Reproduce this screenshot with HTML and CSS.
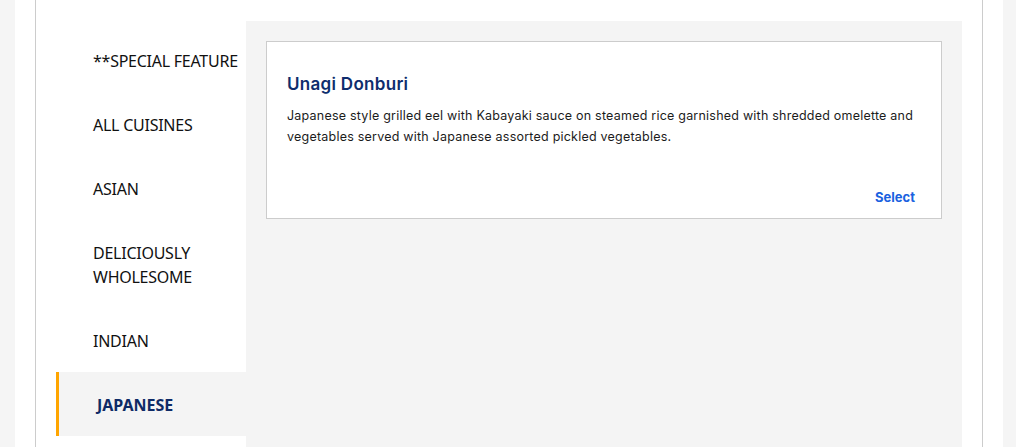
FILE: index.html
```html
<!doctype html>
<html lang="en">

<head>
	<meta charset="utf-8">
	<title>Menu - Japanese</title>
	<link rel="stylesheet" href="styles.css">
</head>

<body>
	<div class="page">
		<div class="frame">
			<ul class="cuisines">
				<li>**SPECIAL FEATURE</li>
				<li>ALL CUISINES</li>
				<li>ASIAN</li>
				<li>DELICIOUSLY WHOLESOME</li>
				<li>INDIAN</li>
				<li class="active">JAPANESE</li>
			</ul>
			<div class="dishes">
				<div class="dish">
					<h3>Unagi Donburi</h3>
					<p>Japanese style grilled eel with Kabayaki sauce on steamed rice garnished with shredded omelette and vegetables served with Japanese assorted pickled vegetables.</p>
					<div class="actions"><a href="#">Select</a></div>
				</div>
			</div>
		</div>
	</div>
</body>

</html>
```

FILE: styles.css
```css
html,
body {
	margin: 0;
	padding: 0;
	height: 100%;
	background: #f5f5f5;
	overflow: hidden;
}
.page {
	margin-left: 15px;
	width: 948px;
	height: 100%;
	padding: 0 20px;
	background: #fff;
}
.frame {
	display: flex;
	align-items: flex-start;
	height: 100%;
	padding: 21px 20px 0 20px;
	border-left: 1px solid #cccccc;
	border-right: 1px solid #cccccc;
	box-sizing: border-box;
}
.cuisines {
	list-style: none;
	margin: 0;
	padding: 7px 0 0 0;
	width: 190px;
	flex: none;
	font-family: "Noto Sans", sans-serif;
	font-size: 16px;
	color: #111;
}
.cuisines li {
	padding: 21px 8px 19px 37px;
	line-height: 24px;
	letter-spacing: -0.25px;
}
.cuisines li.active {
	background: #f4f4f4;
	border-left: 3px solid #ffa500;
	padding-left: 38px;
	font-weight: bold;
	color: #0e2a66;
	letter-spacing: 0;
}
.dishes {
	flex: 1;
	align-self: stretch;
	background: #f4f4f4;
	padding: 20px;
}
.dish {
	background: #fff;
	border: 1px solid #cccccc;
	padding: 30px 24px 11px 20px;
	font-family: Inter, sans-serif;
}
.dish h3 {
	margin: 0;
	font-size: 17px;
	line-height: 24px;
	font-weight: 600;
	color: #0e2d6d;
	letter-spacing: 0.3px;
}
.dish p {
	margin: 9px 0 0 0;
	font-size: 12.5px;
	line-height: 21px;
	color: #1c1c1c;
	letter-spacing: 0.22px;
}
.actions {
	margin-top: 39px;
	text-align: right;
	line-height: 20px;
}
.actions a {
	font-size: 13px;
	font-weight: bold;
	color: #1a62e0;
	text-decoration: none;
	margin-right: 2px;
}
```
